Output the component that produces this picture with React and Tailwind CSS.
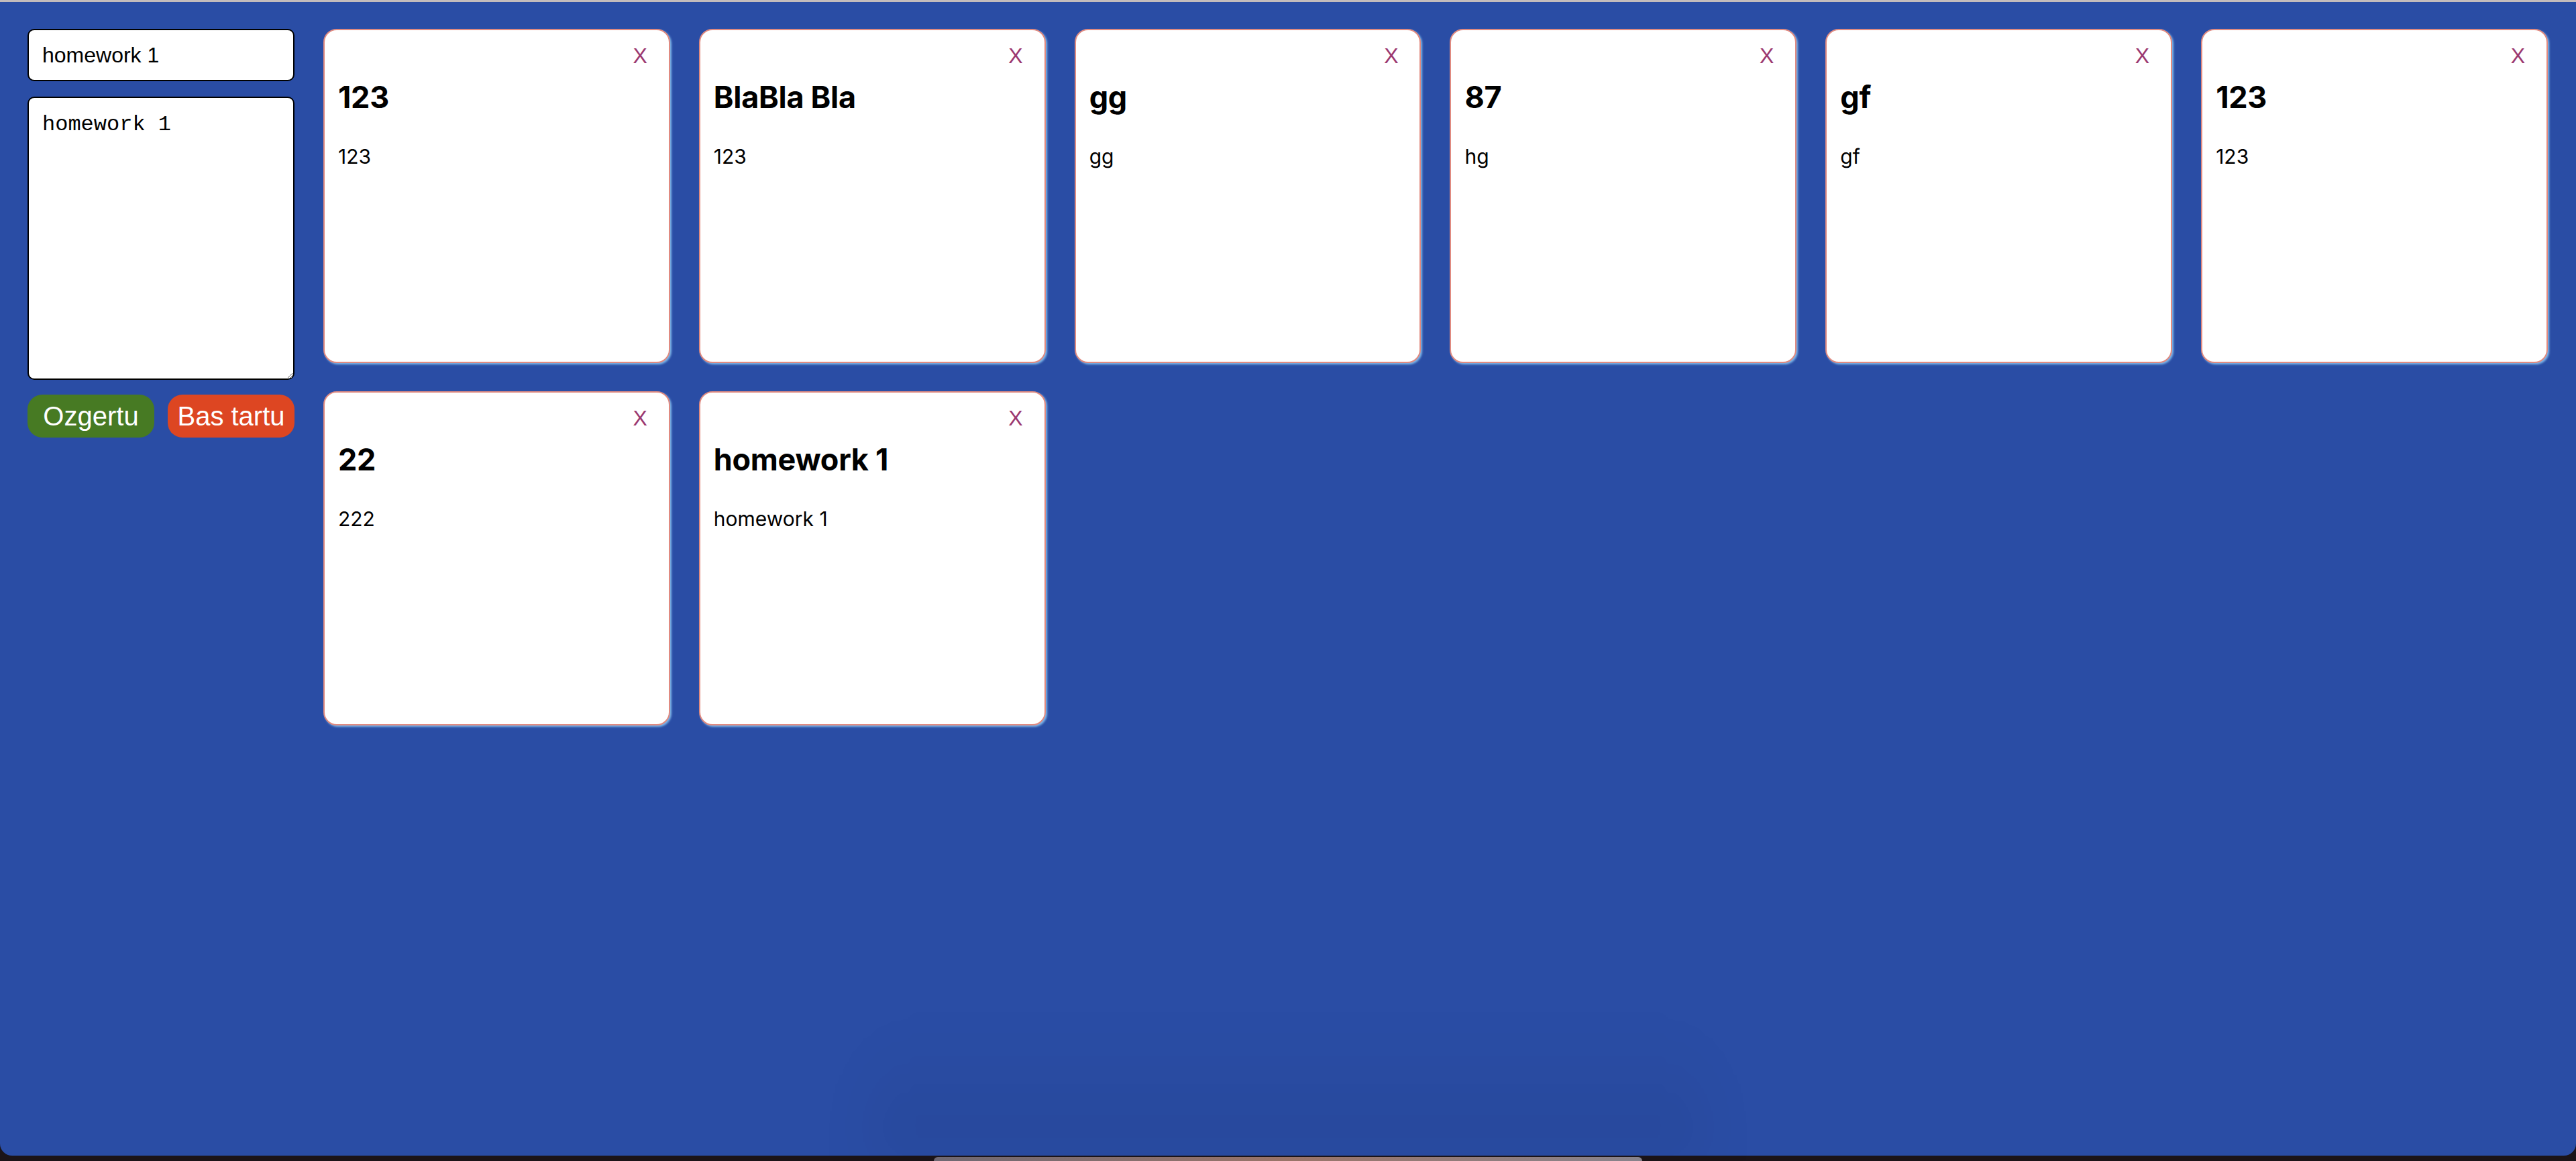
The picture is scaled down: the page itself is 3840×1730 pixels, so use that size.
import React, { useState } from 'react'

const initialNotes = [
  { id: 1, title: '123', text: '123' },
  { id: 2, title: 'BlaBla Bla', text: '123' },
  { id: 3, title: 'gg', text: 'gg' },
  { id: 4, title: '87', text: 'hg' },
  { id: 5, title: 'gf', text: 'gf' },
  { id: 6, title: '123', text: '123' },
  { id: 7, title: '22', text: '222' },
  { id: 8, title: 'homework 1', text: 'homework 1' },
]

function NoteCard({ note, onRemove }) {
  return (
    <div className="h-[498px] rounded-[20px] border-2 border-[#e08a80] bg-white px-[20px] pt-[20px] shadow-[2px_2px_3px_#7fb6e8] font-['Inter',sans-serif] text-black">
      <div className="flex justify-end pr-[12px]">
        <button
          type="button"
          onClick={() => onRemove(note.id)}
          className="text-[32px] leading-[37px] text-[#9b376f] font-['Liberation_Sans',Arial,sans-serif] cursor-pointer"
        >
          X
        </button>
      </div>
      <h2 className="mt-[15px] text-[45px] leading-[55px] font-bold tracking-[-0.3px]">{note.title}</h2>
      <p className="mt-[43px] text-[30px] leading-[36px]">{note.text}</p>
    </div>
  )
}

export default function App() {
  const [notes, setNotes] = useState(initialNotes)
  const [title, setTitle] = useState('homework 1')
  const [text, setText] = useState('homework 1')

  const onRemove = (id) => setNotes(prev => prev.filter(n => n.id !== id))

  const onSave = () => {
    if (!title) return
    setNotes(prev => [...prev, { id: Date.now(), title, text }])
  }

  return (
    <div className="relative h-[1730px] w-full overflow-hidden bg-[#1b1418]">
      {/* window */}
      <div className="flex h-[1722px] items-start gap-[43px] rounded-b-[18px] border-t-[3px] border-[#c3bcbc] bg-[#2a4da5] pl-[41px] pr-[42px] pt-[40px]">
        {/* Left: form */}
        <div className="flex w-[398px] shrink-0 flex-col font-['Liberation_Sans',Arial,sans-serif]">
          <input
            value={title}
            onChange={e => setTitle(e.target.value)}
            className="h-[78px] w-full rounded-[10px] border-2 border-black bg-white px-[20px] text-[32px] text-black focus:outline-none"
          />
          <textarea
            value={text}
            onChange={e => setText(e.target.value)}
            className="mt-[23px] h-[422px] w-full rounded-[10px] border-2 border-black bg-white px-[20px] pt-[22px] text-[32px] leading-[36px] text-black font-['Liberation_Mono','Courier_New',monospace] focus:outline-none"
          />
          <div className="mt-[22px] flex gap-[20px]">
            <button
              type="button"
              onClick={onSave}
              className="h-[64px] flex-1 rounded-[22px] bg-[#477a23] text-[40px] text-white cursor-pointer"
            >
              Ozgertu
            </button>
            <button
              type="button"
              onClick={() => { setTitle(''); setText('') }}
              className="h-[64px] flex-1 rounded-[22px] bg-[#dd4622] text-[40px] text-white cursor-pointer"
            >
              Bas tartu
            </button>
          </div>
        </div>

        {/* Right: notes */}
        <div className="grid flex-1 grid-cols-6 gap-x-[43px] gap-y-[42px]">
          {notes.map(n => (
            <NoteCard key={n.id} note={n} onRemove={onRemove} />
          ))}
        </div>
      </div>

      {/* dock peeking under the window */}
      <div className="absolute bottom-0 left-[1300px] h-[200px] w-[1240px] rounded-t-[100px] bg-gradient-to-t from-black/[0.06] to-transparent blur-[40px]" />
      <div className="absolute bottom-0 left-[1392px] h-[6px] w-[1056px] rounded-t-[12px] bg-gradient-to-r from-[#6e6872] via-[#9a7468] to-[#87838c]" />
    </div>
  )
}
